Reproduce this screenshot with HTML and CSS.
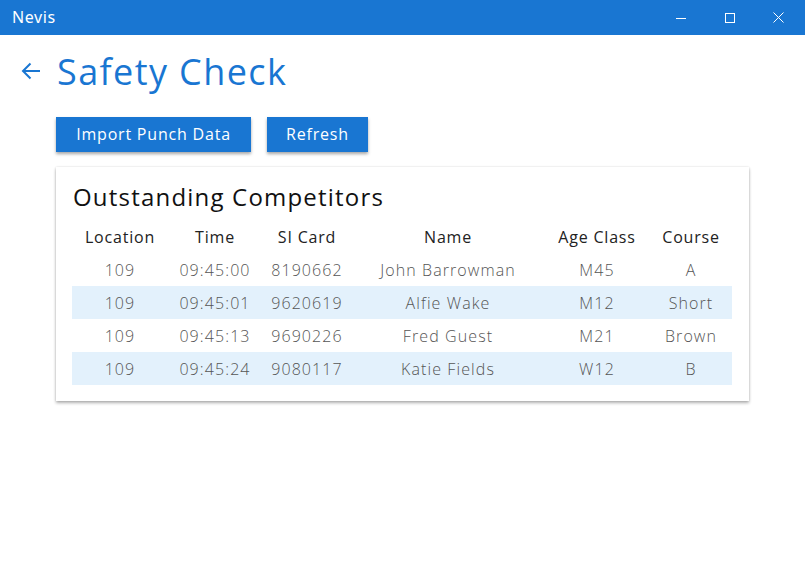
FILE: index.html
```html
<!DOCTYPE html>
<html>
<head>
<meta charset="utf-8">
<link rel="stylesheet" href="styles.css">
</head>
<body>
<div class="titlebar">
  <span class="app-name">Nevis</span>
  <div class="win-controls">
    <span class="wc"><svg width="10" height="10" viewBox="0 0 10 10"><path d="M0 5.5H10" stroke="#fff" stroke-width="1"/></svg></span>
    <span class="wc"><svg width="10" height="10" viewBox="0 0 10 10"><rect x="0.5" y="0.5" width="9" height="9" fill="none" stroke="#fff" stroke-width="1"/></svg></span>
    <span class="wc"><svg width="11" height="11" viewBox="0 0 11 11"><path d="M0.5 0.5L10.5 10.5M10.5 0.5L0.5 10.5" stroke="#fff" stroke-width="1"/></svg></span>
  </div>
</div>
<div class="page">
  <div class="header">
    <svg class="back" width="20" height="18" viewBox="0 0 20 18"><path d="M19 9H2M9.5 1.5L2 9l7.5 7.5" fill="none" stroke="#1976d2" stroke-width="2"/></svg>
    <h1 class="title">Safety Check</h1>
  </div>
  <div class="content">
    <div class="actions">
      <button class="btn">Import Punch Data</button>
      <button class="btn">Refresh</button>
    </div>
    <div class="card">
      <h2 class="card-title">Outstanding Competitors</h2>
      <table class="grid">
        <colgroup>
          <col class="c1"><col class="c2"><col class="c3"><col class="c4"><col class="c5"><col class="c6">
        </colgroup>
        <thead>
          <tr><th>Location</th><th>Time</th><th>SI Card</th><th>Name</th><th>Age Class</th><th>Course</th></tr>
        </thead>
        <tbody>
          <tr><td>109</td><td>09:45:00</td><td>8190662</td><td>John Barrowman</td><td>M45</td><td>A</td></tr>
          <tr class="alt"><td>109</td><td>09:45:01</td><td>9620619</td><td>Alfie Wake</td><td>M12</td><td>Short</td></tr>
          <tr><td>109</td><td>09:45:13</td><td>9690226</td><td>Fred Guest</td><td>M21</td><td>Brown</td></tr>
          <tr class="alt"><td>109</td><td>09:45:24</td><td>9080117</td><td>Katie Fields</td><td>W12</td><td>B</td></tr>
        </tbody>
      </table>
    </div>
  </div>
</div>
</body>
</html>
```
FILE: styles.css
```css
* { box-sizing: border-box; }
html, body { margin: 0; padding: 0; background: #fff; }
body { font-family: "Open Sans", "Noto Sans", sans-serif; color: #222; min-height: 582px; }

.titlebar {
  height: 35px;
  background: #1976d2;
  display: flex;
  align-items: center;
  justify-content: space-between;
  color: #fff;
}
.app-name {
  font-family: "Noto Sans", "Open Sans", sans-serif;
  font-size: 16px;
  letter-spacing: 0.6px;
  padding-left: 12px;
  padding-bottom: 1px;
}
.win-controls { display: flex; height: 100%; }
.wc {
  width: 49px;
  display: flex;
  align-items: center;
  justify-content: center;
}
.wc:last-child { width: 51px; padding-right: 2px; }

.page { padding: 0 0 40px 21px; }
.header {
  display: flex;
  align-items: center;
  height: 76px;
  padding-bottom: 4px;
}
.back { margin-right: 16px; }
.title {
  margin: 0;
  font-weight: 400;
  font-size: 36px;
  color: #1976d2;
  letter-spacing: 1.4px;
}

.content { padding-left: 35px; width: 728px; }
.actions { display: flex; gap: 16px; margin-top: 6px; }
.btn {
  height: 35px;
  border: none;
  background: #1976d2;
  color: #fff;
  font-family: inherit;
  font-size: 16px;
  letter-spacing: 0.8px;
  padding: 0 0 1px 0;
  box-shadow: 0 2px 3px rgba(0,0,0,0.35);
}
.btn:first-child { width: 195px; }
.btn:last-child { width: 101px; }

.card {
  margin-top: 15px;
  background: #fff;
  box-shadow: 0 2px 3px rgba(0,0,0,0.3), 0 0 2px rgba(0,0,0,0.12);
  padding: 13px 16px 16px 16px;
  height: 234px;
}
.card-title {
  margin: 0 0 7px 1px;
  font-weight: 400;
  font-size: 24px;
  color: #111;
  letter-spacing: 1.2px;
}
.grid {
  border-collapse: collapse;
  table-layout: fixed;
  width: 660px;
}
.c1 { width: 96px; }
.c2 { width: 94px; }
.c3 { width: 90px; }
.c4 { width: 192px; }
.c5 { width: 106px; }
.c6 { width: 82px; }
.grid th {
  font-weight: 400;
  font-size: 16px;
  letter-spacing: 0.8px;
  color: #222;
  height: 33px;
  padding: 0;
  text-align: center;
}
.grid td {
  font-weight: 300;
  font-size: 16px;
  letter-spacing: 1.1px;
  color: #555;
  height: 33px;
  padding: 0;
  text-align: center;
}
.grid tr.alt td { background: #e3f1fc; }
```
